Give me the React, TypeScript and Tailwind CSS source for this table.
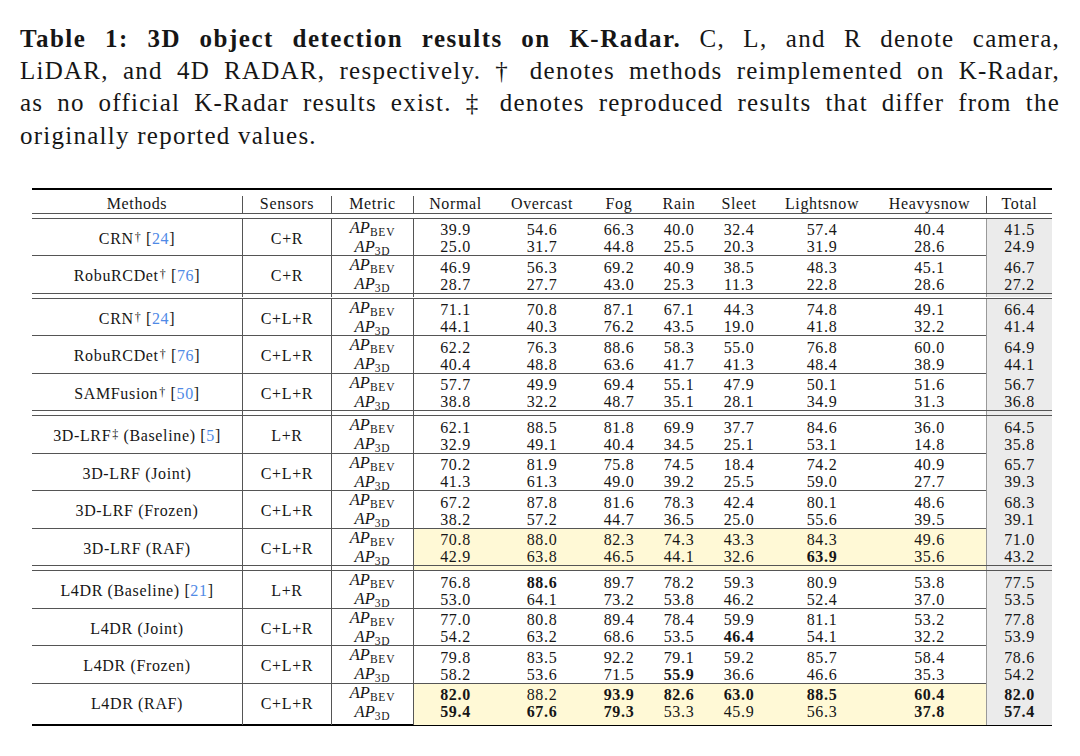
import React from "react";

type Row = {
  name: React.ReactNode;
  sensors: string;
  bev: string[];
  d3: string[];
  hl?: boolean;
};

const cols =
  "grid grid-cols-[210px_89px_82px_84px_90px_64px_56px_64px_102px_113px_66px]";

const Ref = ({ n }: { n: string }) => (
  <span>
    [<span className="text-[#4f8ae6]">{n}</span>]
  </span>
);

const Sup = ({ c }: { c: string }) => (
  <sup className="text-[12px] relative -top-[2px] ml-[1px]">{c}</sup>
);

const groups: Row[][] = [
  [
    {
      name: (
        <>
          CRN<Sup c="†" />&nbsp; <Ref n="24" />
        </>
      ),
      sensors: "C+R",
      bev: ["39.9", "54.6", "66.3", "40.0", "32.4", "57.4", "40.4", "41.5"],
      d3: ["25.0", "31.7", "44.8", "25.5", "20.3", "31.9", "28.6", "24.9"],
    },
    {
      name: (
        <>
          RobuRCDet<Sup c="†" />&nbsp; <Ref n="76" />
        </>
      ),
      sensors: "C+R",
      bev: ["46.9", "56.3", "69.2", "40.9", "38.5", "48.3", "45.1", "46.7"],
      d3: ["28.7", "27.7", "43.0", "25.3", "11.3", "22.8", "28.6", "27.2"],
    },
  ],
  [
    {
      name: (
        <>
          CRN<Sup c="†" />&nbsp; <Ref n="24" />
        </>
      ),
      sensors: "C+L+R",
      bev: ["71.1", "70.8", "87.1", "67.1", "44.3", "74.8", "49.1", "66.4"],
      d3: ["44.1", "40.3", "76.2", "43.5", "19.0", "41.8", "32.2", "41.4"],
    },
    {
      name: (
        <>
          RobuRCDet<Sup c="†" />&nbsp; <Ref n="76" />
        </>
      ),
      sensors: "C+L+R",
      bev: ["62.2", "76.3", "88.6", "58.3", "55.0", "76.8", "60.0", "64.9"],
      d3: ["40.4", "48.8", "63.6", "41.7", "41.3", "48.4", "38.9", "44.1"],
    },
    {
      name: (
        <>
          SAMFusion<Sup c="†" />&nbsp; <Ref n="50" />
        </>
      ),
      sensors: "C+L+R",
      bev: ["57.7", "49.9", "69.4", "55.1", "47.9", "50.1", "51.6", "56.7"],
      d3: ["38.8", "32.2", "48.7", "35.1", "28.1", "34.9", "31.3", "36.8"],
    },
  ],
  [
    {
      name: (
        <>
          3D-LRF<Sup c="‡" />&nbsp;(Baseline)&nbsp;<Ref n="5" />
        </>
      ),
      sensors: "L+R",
      bev: ["62.1", "88.5", "81.8", "69.9", "37.7", "84.6", "36.0", "64.5"],
      d3: ["32.9", "49.1", "40.4", "34.5", "25.1", "53.1", "14.8", "35.8"],
    },
    {
      name: <>3D-LRF (Joint)</>,
      sensors: "C+L+R",
      bev: ["70.2", "81.9", "75.8", "74.5", "18.4", "74.2", "40.9", "65.7"],
      d3: ["41.3", "61.3", "49.0", "39.2", "25.5", "59.0", "27.7", "39.3"],
    },
    {
      name: <>3D-LRF (Frozen)</>,
      sensors: "C+L+R",
      bev: ["67.2", "87.8", "81.6", "78.3", "42.4", "80.1", "48.6", "68.3"],
      d3: ["38.2", "57.2", "44.7", "36.5", "25.0", "55.6", "39.5", "39.1"],
    },
    {
      name: <>3D-LRF (RAF)</>,
      sensors: "C+L+R",
      bev: ["70.8", "88.0", "82.3", "74.3", "43.3", "84.3", "49.6", "71.0"],
      d3: ["42.9", "63.8", "46.5", "44.1", "32.6", "*63.9", "35.6", "43.2"],
      hl: true,
    },
  ],
  [
    {
      name: (
        <>
          L4DR (Baseline)&nbsp;<Ref n="21" />
        </>
      ),
      sensors: "L+R",
      bev: ["76.8", "*88.6", "89.7", "78.2", "59.3", "80.9", "53.8", "77.5"],
      d3: ["53.0", "64.1", "73.2", "53.8", "46.2", "52.4", "37.0", "53.5"],
    },
    {
      name: <>L4DR (Joint)</>,
      sensors: "C+L+R",
      bev: ["77.0", "80.8", "89.4", "78.4", "59.9", "81.1", "53.2", "77.8"],
      d3: ["54.2", "63.2", "68.6", "53.5", "*46.4", "54.1", "32.2", "53.9"],
    },
    {
      name: <>L4DR (Frozen)</>,
      sensors: "C+L+R",
      bev: ["79.8", "83.5", "92.2", "79.1", "59.2", "85.7", "58.4", "78.6"],
      d3: ["58.2", "53.6", "71.5", "*55.9", "36.6", "46.6", "35.3", "54.2"],
    },
    {
      name: <>L4DR (RAF)</>,
      sensors: "C+L+R",
      bev: ["*82.0", "88.2", "*93.9", "*82.6", "*63.0", "*88.5", "*60.4", "*82.0"],
      d3: ["*59.4", "*67.6", "*79.3", "53.3", "45.9", "56.3", "*37.8", "*57.4"],
      hl: true,
    },
  ],
];

const V = ({ v }: { v: string }) =>
  v.startsWith("*") ? (
    <span className="font-bold">{v.slice(1)}</span>
  ) : (
    <span>{v}</span>
  );

const AP = ({ sub }: { sub: string }) => (
  <span className="tracking-normal">
    <span className="italic text-[16.5px]">AP</span>
    <span className="text-[11.5px] relative top-[3px] tracking-[0.07em]">{sub}</span>
  </span>
);

function DataRow({ r }: { r: Row }) {
  const hlc = r.hl ? "bg-[#fff9d6]" : "";
  return (
    <div className={`${cols} h-[36.5px]`}>
      <div className="flex items-center justify-center pb-[1px] whitespace-nowrap">{r.name}</div>
      <div className="flex items-center justify-center border-l border-[#555] pb-[1px]">
        {r.sensors}
      </div>
      <div className="flex flex-col items-center justify-center border-l border-[#555] leading-[17px] pb-[3px]">
        <AP sub="BEV" />
        <AP sub="3D" />
      </div>
      {r.bev.slice(0, 7).map((b, i) => (
        <div
          key={i}
          className={`flex flex-col items-center justify-center leading-[17px] pb-[2px] ${hlc} ${
            i === 0 ? "border-l border-[#555]" : ""
          }`}
        >
          <V v={b} />
          <V v={r.d3[i]} />
        </div>
      ))}
      <div className="flex flex-col items-center justify-center leading-[17px] pb-[2px] bg-[#ebebeb] border-l border-[#999]">
        <V v={r.bev[7]} />
        <V v={r.d3[7]} />
      </div>
    </div>
  );
}

const DoubleRule = () => (
  <div className="flex flex-col">
    <div className="h-px bg-[#555]" />
    <div className="h-[4px]" />
    <div className="h-px bg-[#555]" />
  </div>
);

export default function App() {
  const line = "text-justify [text-align-last:justify] whitespace-nowrap";
  return (
    <div className="w-[1080px] h-[756px] bg-white text-[#161616] font-['Liberation_Serif',serif] overflow-hidden">
      <div className="px-[20px] pt-[23px] text-[25px] leading-[32.2px] tracking-[0.05em]">
        <div className={line}>
          <span className="font-bold tracking-[0.06em]">
            Table 1: 3D object detection results on K-Radar.
          </span>{" "}
          C, L, and R denote camera,
        </div>
        <div className={line}>
          LiDAR, and 4D RADAR, respectively. † denotes methods reimplemented on K-Radar,
        </div>
        <div className={line}>
          as no official K-Radar results exist. ‡ denotes reproduced results that differ from the
        </div>
        <div>originally reported values.</div>
      </div>

      <div className="ml-[32px] mt-[36px] w-[1020px] text-[16px] tracking-[0.04em]">
        <div className="h-[2px] bg-black" />
        <div className="h-[6.5px]" />
        <div className={`${cols} h-[16.5px] leading-[15px]`}>
          <div className="text-center">Methods</div>
          <div className="text-center border-l border-[#555]">Sensors</div>
          <div className="text-center border-l border-[#555]">Metric</div>
          <div className="text-center border-l border-[#555]">Normal</div>
          <div className="text-center">Overcast</div>
          <div className="text-center">Fog</div>
          <div className="text-center">Rain</div>
          <div className="text-center">Sleet</div>
          <div className="text-center">Lightsnow</div>
          <div className="text-center">Heavysnow</div>
          <div className="text-center border-l border-[#555]">Total</div>
        </div>
        <DoubleRule />
        {groups.map((g, gi) => (
          <div key={gi}>
            {gi > 0 && <DoubleRule />}
            {g.map((r, ri) => (
              <div key={ri}>
                {ri > 0 && <div className="h-px bg-[#555]" />}
                <DataRow r={r} />
              </div>
            ))}
          </div>
        ))}
        <div className="h-[4px]" />
        <div className="h-[2px] bg-black" />
      </div>
    </div>
  );
}
